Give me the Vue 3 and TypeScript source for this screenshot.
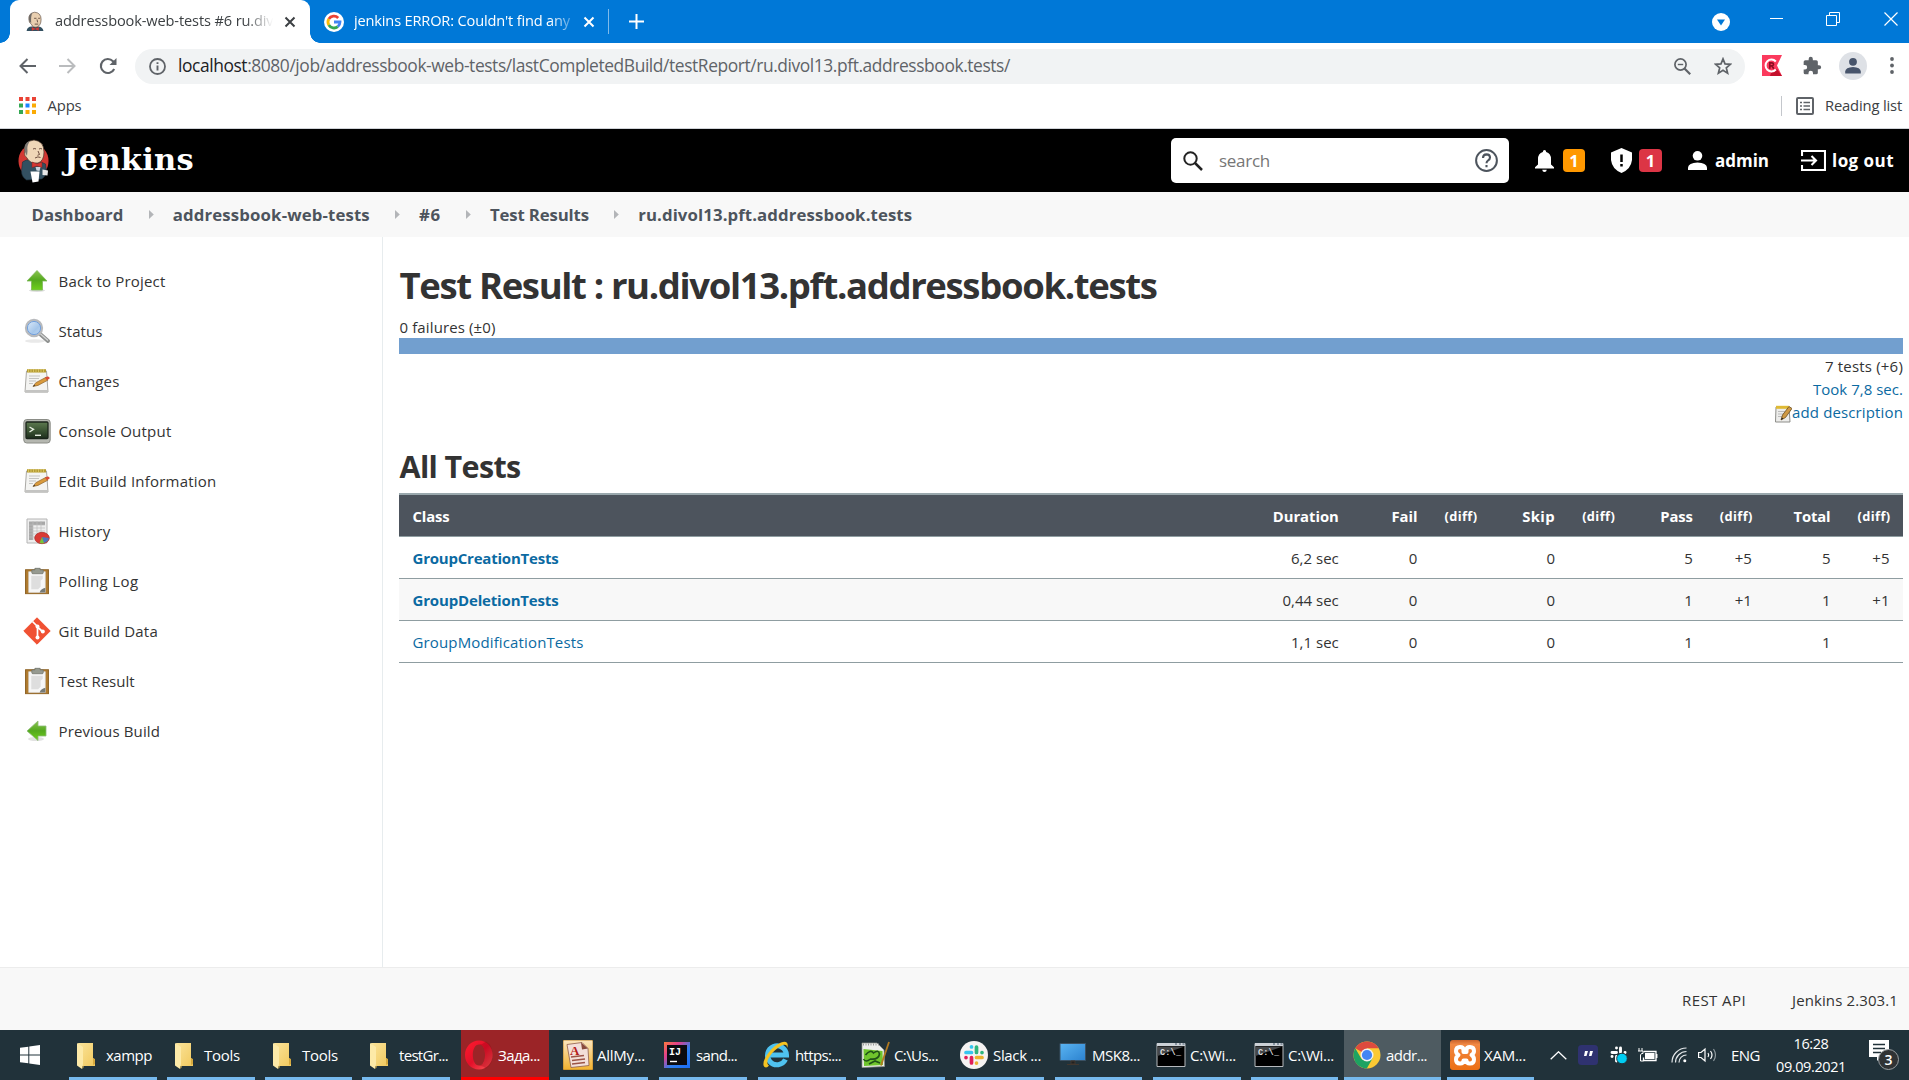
<script setup lang="ts">
interface Task { icon: string; label: string; width: number; left: number; size: number; state?: string }
interface Row { name: string; width: number; bold: boolean; cells: string[] }

// Spreads a label's letters so that it takes the given width in pixels.
const vFit = {
  mounted(el: HTMLElement, binding: { value: number }) {
    const natural = el.getBoundingClientRect().width
    const count = (el.textContent ?? '').length
    if (!count || !binding.value) return
    const gap = (binding.value - natural) / count
    el.style.letterSpacing = `${gap.toFixed(3)}px`
  },
}

const crumbs = [
  { label: 'Dashboard', width: 92 },
  { label: 'addressbook-web-tests', width: 197 },
  { label: '#6', width: 21.5 },
  { label: 'Test Results', width: 99 },
  { label: 'ru.divol13.pft.addressbook.tests', width: 274 },
]

const links = [
  { icon: 'up', label: 'Back to Project', width: 107 },
  { icon: 'search', label: 'Status', width: 44 },
  { icon: 'note', label: 'Changes', width: 61 },
  { icon: 'terminal', label: 'Console Output', width: 113 },
  { icon: 'note', label: 'Edit Build Information', width: 158 },
  { icon: 'history', label: 'History', width: 52 },
  { icon: 'clip', label: 'Polling Log', width: 80 },
  { icon: 'git', label: 'Git Build Data', width: 99.5 },
  { icon: 'clip', label: 'Test Result', width: 76 },
  { icon: 'left', label: 'Previous Build', width: 101.5 },
]

const heads = [
  { label: 'Duration', width: 66 }, { label: 'Fail', width: 26 }, { label: '(diff)', width: 33 },
  { label: 'Skip', width: 33 }, { label: '(diff)', width: 33 }, { label: 'Pass', width: 32.5 },
  { label: '(diff)', width: 33 }, { label: 'Total', width: 37 }, { label: '(diff)', width: 33 },
]

const rows: Row[] = [
  { name: 'GroupCreationTests', width: 146, bold: true, cells: ['6,2 sec', '0', '', '0', '', '5', '+5', '5', '+5'] },
  { name: 'GroupDeletionTests', width: 146, bold: true, cells: ['0,44 sec', '0', '', '0', '', '1', '+1', '1', '+1'] },
  { name: 'GroupModificationTests', width: 171, bold: false, cells: ['1,1 sec', '0', '', '0', '', '1', '', '1', ''] },
]

const tasks: Task[] = [
  { icon: 'folder', label: 'xampp', width: 46, left: 69, size: 88 },
  { icon: 'folder', label: 'Tools', width: 36, left: 167, size: 88 },
  { icon: 'folder', label: 'Tools', width: 36, left: 265, size: 87 },
  { icon: 'folder', label: 'testGr...', width: 49, left: 362, size: 88 },
  { icon: 'opera', label: 'Зада...', width: 42, left: 461, size: 88, state: 'alert' },
  { icon: 'notes', label: 'AllMy...', width: 48, left: 560, size: 88 },
  { icon: 'idea', label: 'sand...', width: 41, left: 659, size: 88 },
  { icon: 'ie', label: 'https:...', width: 46, left: 758, size: 88 },
  { icon: 'npp', label: 'C:\\Us...', width: 44, left: 857, size: 88 },
  { icon: 'slack', label: 'Slack ...', width: 48, left: 956, size: 88 },
  { icon: 'screen', label: 'MSK8...', width: 48, left: 1055, size: 87 },
  { icon: 'cmd', label: 'C:\\Wi...', width: 46, left: 1153, size: 88 },
  { icon: 'cmd', label: 'C:\\Wi...', width: 46, left: 1251, size: 87 },
  { icon: 'chrome', label: 'addr...', width: 41, left: 1344, size: 97, state: 'active' },
  { icon: 'xampp', label: 'XAM...', width: 42, left: 1447, size: 87 },
]
const gapBefore = (i: number) => (i === 0 ? tasks[0].left - 49 : tasks[i].left - tasks[i - 1].left - tasks[i - 1].size)
</script>

<template>
  <div class="desktop">
    <svg width="0" height="0" class="defs">
      <defs>
        <linearGradient id="gGreen" x1="0" y1="0" x2="0" y2="1"><stop offset="0" stop-color="#8bc34f" /><stop offset=".5" stop-color="#54a91e" /><stop offset="1" stop-color="#6fd01c" /></linearGradient>
        <linearGradient id="gLens" x1="0" y1="0" x2="1" y2="1"><stop offset="0" stop-color="#e4effb" /><stop offset=".6" stop-color="#a5c6ea" /><stop offset="1" stop-color="#c6dcf3" /></linearGradient>
        <linearGradient id="gTerm" x1="0" y1="0" x2="0" y2="1"><stop offset="0" stop-color="#5d7a50" /><stop offset=".5" stop-color="#3c5534" /><stop offset="1" stop-color="#1e2e1d" /></linearGradient>
        <linearGradient id="gFolder" x1="0" y1="0" x2="1" y2="1"><stop offset="0" stop-color="#fbe49a" /><stop offset="1" stop-color="#f1c95e" /></linearGradient>
        <linearGradient id="gOpera" x1="0" y1="0" x2="1" y2="1"><stop offset="0" stop-color="#ff1b2d" /><stop offset=".5" stop-color="#e3102a" /><stop offset="1" stop-color="#ff5a5a" /></linearGradient>
        <linearGradient id="gIdea" x1="0" y1="0" x2="1" y2="1"><stop offset="0" stop-color="#fd7a3d" /><stop offset=".3" stop-color="#e23f8c" /><stop offset=".6" stop-color="#2d7ff0" /><stop offset="1" stop-color="#1c6cf5" /></linearGradient>
        <linearGradient id="gNotes" x1="0" y1="0" x2="0" y2="1"><stop offset="0" stop-color="#fbe6c0" /><stop offset="1" stop-color="#f2b22e" /></linearGradient>
        <linearGradient id="gScreen" x1="0" y1="0" x2="1" y2="1"><stop offset="0" stop-color="#5ab4f2" /><stop offset="1" stop-color="#2b82cf" /></linearGradient>
        <linearGradient id="gXampp" x1="0" y1="0" x2="0" y2="1"><stop offset="0" stop-color="#c9622a" /><stop offset=".15" stop-color="#f18843" /><stop offset="1" stop-color="#ec6e12" /></linearGradient>
        <symbol id="pad" viewBox="0 0 26 26">
          <path d="M2.500 3h20l1.500 21H1z" fill="#f4f4f2" stroke="#aaa9a5" />
          <path d="M1.200 22h22.600v2.600H1.200z" fill="#c4c4c2" />
          <path d="M3 1.200h19v3.300H3z" fill="#b49b32" />
          <path d="M4.500 1v3.500M7 1v3.500M9.500 1v3.500M12 1v3.500M14.500 1v3.500M17 1v3.500M19.500 1v3.500" stroke="#e0cb6d" stroke-width=".8" />
          <path d="M5 8h11M5 10.500h10M5 13h7M5 15.500h4" stroke="#c3c3c1" />
          <path d="M9 18.500l2.800-3.800L22 9.300l2 2.800-10 5.300z" fill="#d99a3c" stroke="#8e632b" stroke-width=".7" />
          <path d="M21 9.800l2.200-1.200q2.200-.3 2.600 1.600L23 12.300z" fill="#d84a38" /><path d="M9 18.500l1.200-1.700 1 1z" fill="#333" />
        </symbol>
        <symbol id="clipb" viewBox="0 0 26 26">
          <path d="M2 2.200h22v23H2z" fill="#b07c30" stroke="#8d6122" /><path d="M5 4h16v20H5z" fill="#f7f7f7" stroke="#d6d6d6" stroke-width=".6" />
          <path d="M7.500 8h11v3l-2 1.500v6L14 21H7.500z" fill="#dedede" /><path d="M15.500 24q1-3.500 5.500-4.500V24z" fill="#777b78" />
          <path d="M8 2.300h3V.6h5v1.700h3V5q0 1-1 1H9Q8 6 8 5z" fill="#969a90" stroke="#6f736a" stroke-width=".7" />
        </symbol>
        <symbol id="butler" viewBox="0 0 31 44">
          <ellipse cx="15.500" cy="22" rx="15" ry="16.500" fill="#d33833" />
          <path d="M4.500 23q4-3 8-2l8 1 7 3 1 8q-2 6-5 7l-15 1q-5-3-5-9z" fill="#335061" stroke="#1d2f3a" stroke-width=".6" />
          <path d="M6.500 12.500Q6 2 16 1q10 1 10 12 0 9-6 11-8 1-11-5-3-2-2.500-6.500z" fill="#f0d6b7" stroke="#49372d" stroke-width=".7" />
          <path d="M7 13Q5 4 12 1.800 8.500 7 9.500 12l-.5 5z" fill="#7b7772" />
          <path d="M15 10q2-1 3 0M21 10q2-1 3 0M20 12l1.500 3.500-2 .8M17 19q3-2 5.500-.5" fill="none" stroke="#6b4b3e" stroke-width="1" />
          <path d="M14 23l5 1.800 5-1.800v5.500l-5-1.500-5 1.500z" fill="#d33833" stroke="#81201c" stroke-width=".5" /><path d="M17.500 28h5l-1 4-3-.5z" fill="#c9d3dc" />
          <path d="M12.500 32.500h9l-1 10-6 1z" fill="#fff" /><path d="M24.500 30.500l5.500 1-.5 5-5-.5z" fill="#e8e8e8" />
        </symbol>
        <symbol id="cmdw" viewBox="0 0 30 30">
          <path d="M1 3.500h28v23H1z" fill="#000" stroke="#b7babd" stroke-width="1" /><path d="M1.500 6.500h27L1.500 16z" fill="#45484a" />
          <path d="M1 3h28v3H1z" fill="#ccd1d6" /><path d="M19 4h2M23 4h2M26.500 4h2" stroke="#71808f" stroke-width="1.400" />
        </symbol>
      </defs>
    </svg>

    <!-- browser tabs -->
    <div class="tabs">
      <div class="tab">
        <svg width="18" height="21" viewBox="0 0 31 33"><path d="M1 33q1-8 9-8l12 0q7 1 8 8z" fill="#335061" /><path d="M5 13Q4 2 15 .5q11 1 11 12.500 0 10-7 13-7 2-10-5-4-2-4-8z" fill="#e9cfb0" stroke="#49372d" /><path d="M5 13Q4 4 11 2 8 7 9 19q-4-2-4-6z" fill="#6f6a66" /><path d="M14 11h4M21 11h3M19 13l1 5M15 21h6" stroke="#5c4538" stroke-width="1.500" /><path d="M10 26l6 3 6-3v6.500l-6-2.500-6 2.500z" fill="#d33833" /></svg>
        <span class="tab-title"><span v-fit="218.5">addressbook-web-tests #6 ru.div</span></span>
        <svg class="x1" width="12" height="12" viewBox="0 0 12 12"><path d="M1.500 1.500l9 9M10.500 1.500l-9 9" stroke="#3c4043" stroke-width="2" /></svg>
      </div>
      <svg class="google" width="20" height="20" viewBox="0 0 20 20"><circle cx="10" cy="10" r="10" fill="#fff" /><g fill="none" stroke-width="2.800"><path d="M14.200 5.900A6 6 0 0 0 4.800 7" stroke="#ea4335" /><path d="M4.800 7a6 6 0 0 0 0 6" stroke="#fbbc05" /><path d="M4.800 13a6 6 0 0 0 9 1.600" stroke="#34a853" /><path d="M13.800 14.600A6 6 0 0 0 16 10h-6" stroke="#4285f4" /></g></svg>
      <span class="tab-title light"><span v-fit="216">jenkins ERROR: Couldn't find any</span></span>
      <svg class="x2" width="12" height="12" viewBox="0 0 12 12"><path d="M1.500 1.500l9 9M10.500 1.500l-9 9" stroke="#fff" stroke-width="2" /></svg>
      <i class="tab-sep"></i>
      <svg width="15" height="15" viewBox="0 0 15 15"><path d="M7.500 0v15M0 7.500h15" stroke="#fff" stroke-width="2" /></svg>
      <div class="win">
        <svg width="18" height="18" viewBox="0 0 18 18"><circle cx="9" cy="9" r="9" fill="#fff" /><path d="M5 6.500h8L9 12.500z" fill="#0078d7" /></svg>
        <svg class="w-min" width="13" height="13" viewBox="0 0 13 13"><path d="M0 6.500h13" stroke="#fff" /></svg>
        <svg class="w-max" width="14" height="14" viewBox="0 0 14 14"><path d="M.5 3.500h10v10H.5zM3.500 3V.5h10v10H11" fill="none" stroke="#fff" /></svg>
        <svg class="w-close" width="14" height="14" viewBox="0 0 14 14"><path d="M.5.5l13 13M13.500.5l-13 13" stroke="#fff" stroke-width="1.200" /></svg>
      </div>
    </div>

    <!-- address bar -->
    <div class="toolbar">
      <svg width="17" height="16" viewBox="0 0 17 16" fill="none" stroke="#5f6368" stroke-width="2"><path d="M17 8H1.500M8.500 1l-7 7 7 7" /></svg>
      <svg class="fwd" width="17" height="16" viewBox="0 0 17 16" fill="none" stroke="#babcbe" stroke-width="2"><path d="M0 8h15.500M8.500 1l7 7-7 7" /></svg>
      <svg class="reload" width="18" height="18" viewBox="0 0 18 18"><path d="M15.200 12A7 7 0 1 1 14 4.200L15.500 6" fill="none" stroke="#5f6368" stroke-width="2.100" /><path d="M17.500 1v7h-7z" fill="#5f6368" /></svg>
      <div class="omni">
        <svg width="17" height="17" viewBox="0 0 17 17"><circle cx="8.500" cy="8.500" r="7.500" fill="none" stroke="#5f6368" stroke-width="1.800" /><path d="M8.500 7.400v5M8.500 4.200v1.900" stroke="#5f6368" stroke-width="1.900" /></svg>
        <span v-fit="832" class="url"><b>localhost</b>:8080/job/addressbook-web-tests/lastCompletedBuild/testReport/ru.divol13.pft.addressbook.tests/</span>
        <svg class="zoomi" width="17" height="17" viewBox="0 0 17 17" fill="none" stroke="#5f6368"><circle cx="6.500" cy="6.500" r="5.600" stroke-width="1.700" /><path d="M10.500 10.500l5.700 5.700" stroke-width="2.200" /><path d="M3.800 6.500h5.400" stroke-width="1.400" /></svg>
        <svg class="star" width="18" height="18" viewBox="0 0 18 18"><path d="M9 1.900l2 5 5.400.4-4.100 3.500 1.300 5.300L9 13.200l-4.600 2.900 1.300-5.300L1.600 7.300 7 6.900z" fill="none" stroke="#5f6368" stroke-width="1.700" /></svg>
      </div>
      <svg class="ext" width="20" height="21" viewBox="0 0 20 21"><path d="M0 0h20l-5 10.500L20 21H0z" fill="#fb3a5d" /><path d="M9 18l6-4 5 7H8z" fill="#c4102c" /><path d="M13.800 6.500a5.900 5.900 0 1 0 0 8" fill="none" stroke="#fff" stroke-width="2" /><path d="M7.800 13.800V7.800h2.200q1.600.2 1.500 1.600-.2 1.400-1.500 1.400H8M10 11l1.800 2.800" fill="none" stroke="#8d0e22" stroke-width="1.700" /></svg>
      <svg class="puz" width="20" height="20" viewBox="0 0 24 24"><path fill="#5f6368" d="M20.500 11H19V7a2 2 0 0 0-2-2h-4V3.500a2.500 2.500 0 0 0-5 0V5H4a2 2 0 0 0-2 2v3.800h1.500a2.700 2.700 0 0 1 0 5.400H2V20a2 2 0 0 0 2 2h3.800v-1.500a2.700 2.700 0 0 1 5.400 0V22H17a2 2 0 0 0 2-2v-4h1.500a2.500 2.500 0 0 0 0-5z" /></svg>
      <svg class="ava" width="28" height="28" viewBox="0 0 28 28"><circle cx="14" cy="14" r="14" fill="#dee1e6" /><circle cx="14" cy="9.800" r="3.900" fill="#47546b" /><path d="M6.200 21.500v-2q.3-4 7.800-4.400 7.500.4 7.800 4.400v2z" fill="#47546b" /></svg>
      <svg class="dots" width="4" height="17" viewBox="0 0 4 17" fill="#5f6368"><circle cx="2" cy="2" r="1.900" /><circle cx="2" cy="8.500" r="1.900" /><circle cx="2" cy="15" r="1.900" /></svg>
    </div>

    <div class="bookmarks">
      <svg width="17" height="17" viewBox="0 0 17 17"><path d="M0 0h4v4H0zM6.500 0h4v4h-4zM13 0h4v4h-4z" fill="#ea4335" /><path d="M0 6.500h4v4H0zM0 13h4v4H0z" fill="#34a853" /><path d="M6.500 6.500h4v4h-4z" fill="#1a85ff" /><path d="M13 6.500h4v4h-4zM6.500 13h4v4h-4zM13 13h4v4h-4z" fill="#fbab05" /></svg>
      <span v-fit="34" class="apps">Apps</span>
      <i class="bm-sep"></i>
      <svg width="18" height="18" viewBox="0 0 18 18"><rect x="1" y="1" width="16" height="16" rx="1" fill="none" stroke="#5f6368" stroke-width="2" /><path d="M4 5.500h2M7.500 5.500H14M4 9h2M7.500 9H14M4 12.500h2M7.500 12.500H14" stroke="#5f6368" stroke-width="1.500" /></svg>
      <span v-fit="77" class="reading">Reading list</span>
    </div>

    <!-- Jenkins header -->
    <header class="head">
      <svg width="31" height="44"><use href="#butler" /></svg>
      <span class="brand"><span v-fit="130">Jenkins</span></span>
      <div class="search">
        <svg width="20" height="20" viewBox="0 0 20 20" fill="none" stroke="#222"><circle cx="7.500" cy="7.500" r="6.200" stroke-width="2" /><path d="M12 12l7 7" stroke-width="2.500" /></svg>
        <span class="ph"><span v-fit="51">search</span></span>
        <svg class="help" width="23" height="23" viewBox="0 0 23 23" fill="none" stroke="#4d545d"><circle cx="11.500" cy="11.500" r="10.400" stroke-width="2" /><path d="M8 9q0-3.500 3.500-3.600Q15 5.400 15 8.600q0 1.700-1.800 2.700-1.700 1-1.700 3M11.500 16v2.200" stroke-width="2.100" /></svg>
      </div>
      <svg class="bell" width="19" height="22" viewBox="0 0 19 22" fill="#fff"><path d="M9.500 0q1.600 0 1.700 2Q16 3.500 16 9v5.500l3 2.800V18.500H0v-1.200l3-2.800V9q0-5.500 4.800-7Q7.900 0 9.500 0zM7.200 19.800h4.600q-.3 2.200-2.300 2.200t-2.300-2.200z" /></svg>
      <span class="badge o">1</span>
      <svg class="shield" width="21" height="25" viewBox="0 0 21 25"><path d="M10.500 0L21 4.500V12q-1 9-10.500 13Q1 21 0 12V4.500z" fill="#fff" /><path d="M10.500 6.500v7.500M10.500 16v2.600" stroke="#000" stroke-width="2.500" /></svg>
      <span class="badge r">1</span>
      <svg class="person" width="19" height="19" viewBox="0 0 19 19" fill="#fff"><circle cx="9.500" cy="4.800" r="4.800" /><path d="M0 19v-2.500q.5-4.500 9.500-5 9 .5 9.500 5V19z" /></svg>
      <span class="user"><span v-fit="54">admin</span></span>
      <svg class="exit" width="25" height="21" viewBox="0 0 25 21" fill="none" stroke="#fff" stroke-width="2.100"><path d="M1 6V1h23v19H1v-5M0 10.500h15M10.500 6l4.500 4.500-4.500 4.500" /></svg>
      <span v-fit="62" class="logout">log out</span>
    </header>

    <nav class="crumbs">
      <template v-for="(c, i) in crumbs" :key="c.label">
        <svg v-if="i" width="5" height="9" viewBox="0 0 5 9"><path d="M0 0l4.800 4.500L0 9z" fill="#b3b5b8" /></svg>
        <span class="crumb" v-fit="c.width">{{ c.label }}</span>
      </template>
    </nav>

    <div class="page">
      <aside>
        <a v-for="l in links" :key="l.label" class="link">
          <svg width="28" height="28" viewBox="0 0 28 28">
            <g v-if="l.icon === 'up'"><ellipse cx="14" cy="23.500" rx="8" ry="1.500" fill="#ddd" /><path d="M14 3.500L24 14h-4.500v9h-11v-9H4z" fill="url(#gGreen)" stroke="#7db95a" stroke-width=".8" /></g>
            <g v-else-if="l.icon === 'left'"><ellipse cx="13" cy="22" rx="8" ry="2" fill="#e2e2e2" /><path d="M4 14L15 4v5h8v10h-8v4.500z" fill="url(#gGreen)" stroke="#8dbb78" stroke-width=".8" /></g>
            <g v-else-if="l.icon === 'search'"><ellipse cx="12" cy="24" rx="10" ry="1.800" fill="#e9e9e9" /><path d="M16.500 16.500l8.500 7.500" stroke="#8f9190" stroke-width="4" stroke-linecap="round" /><path d="M17 16.500l8 7" stroke="#d4d5d5" stroke-width="1.300" /><circle cx="11" cy="11" r="8" fill="url(#gLens)" stroke="#b8babd" stroke-width="2.300" /><circle cx="11" cy="11" r="6.600" fill="none" stroke="#6b9cdc" stroke-width=".9" /></g>
            <use v-else-if="l.icon === 'note'" href="#pad" x="1" y="1" width="26" height="26" />
            <g v-else-if="l.icon === 'terminal'"><rect x=".8" y="2.500" width="26.400" height="23.500" rx="3" fill="#b5b7b0" stroke="#8a8c86" /><rect x="3" y="5" width="22" height="16.500" rx="1" fill="url(#gTerm)" stroke="#1b241b" stroke-width="1.300" /><path d="M6.500 10l4 2.300-4 2.700" fill="none" stroke="#e5ecdf" stroke-width="1.400" /><path d="M12 18.300h6" stroke="#e5ecdf" stroke-width="1.400" /></g>
            <g v-else-if="l.icon === 'history'"><path d="M4 2h20v24H4z" fill="#eee" stroke="#b5b5b5" /><path d="M6 4.500h16V8H10v15H6z" fill="#a8a8a8" /><path d="M6 8h16M6 11h16M6 14h16M6 17h14M6 20h12M10 4v19M14 4v16M18 4v14" stroke="#bdbdbd" stroke-width=".7" /><ellipse cx="19" cy="21" rx="7.300" ry="5.700" fill="#d93a35" stroke="#a82522" stroke-width=".7" /><path d="M19 20l7 1q-.5 4-5.500 5z" fill="#4b78bd" /><path d="M19 20l2 6.300q-2.500.3-4.500-.3z" fill="#78c33a" /></g>
            <use v-else-if="l.icon === 'clip'" href="#clipb" x="0.500" y="0.500" width="27" height="27" />
            <g v-else><path d="M14 .8L27.200 14 14 27.200.8 14z" fill="#f05133" stroke="#f05133" stroke-linejoin="round" /><path d="M9.500 4.500l5 5v12M14.500 10l5.500 5" fill="none" stroke="#fff" stroke-width="1.700" /><circle cx="14.500" cy="9.500" r="2" fill="#fff" /><circle cx="14.500" cy="20.500" r="2" fill="#fff" /><circle cx="19.800" cy="14.600" r="2" fill="#fff" /></g>
          </svg>
          <span v-fit="l.width">{{ l.label }}</span>
        </a>
      </aside>
      <main>
        <h1><span v-fit="757">Test Result : ru.divol13.pft.addressbook.tests</span></h1>
        <div class="fails"><span v-fit="96">0 failures (±0)</span></div>
        <div class="bar"></div>
        <div class="meta"><span v-fit="78">7 tests (+6)</span></div>
        <div class="meta blue"><span v-fit="90">Took 7,8 sec.</span></div>
        <div class="meta blue">
          <svg width="17" height="18" viewBox="0 0 17 18"><path d="M1 2h13l1 15H.5z" fill="#ededeb" stroke="#8d8d89" /><path d="M1 .8h13v3H1z" fill="#dfba35" /><path d="M3 6.500h7M3 9h6M3 11.500h4" stroke="#bbb" /><path d="M6 15l1.500-5L14 1.500l3 2-6.500 9z" fill="#cf9a45" stroke="#6b4c20" stroke-width=".8" /><path d="M6 15l.8-2.600 1.600 1z" fill="#222" /></svg>
          <span v-fit="111">add description</span>
        </div>
        <h2><span v-fit="121">All Tests</span></h2>
        <table>
          <colgroup><col /><col class="c-dur" /><col class="c79" /><col class="c59" /><col class="c79" /><col class="c59" /><col class="c79" /><col class="c59" /><col class="c79" /><col class="c59" /></colgroup>
          <thead><tr><th class="name"><span v-fit="37">Class</span></th><th v-for="(h, i) in heads" :key="i" :class="{ diff: h.label === '(diff)' }"><span v-fit="h.width">{{ h.label }}</span></th></tr></thead>
          <tbody>
            <tr v-for="r in rows" :key="r.name">
              <td class="name" :class="{ bold: r.bold }"><span v-fit="r.width">{{ r.name }}</span></td>
              <td v-for="(c, i) in r.cells" :key="i">{{ c }}</td>
            </tr>
          </tbody>
        </table>
      </main>
    </div>

    <footer><span v-fit="64">REST API</span><span v-fit="106" class="ver">Jenkins 2.303.1</span></footer>

    <!-- Windows taskbar -->
    <div class="taskbar">
      <svg class="start" width="20" height="20" viewBox="0 0 20 20" fill="#fff"><path d="M0 2.800L8.300 1.700V9.500H0zM9.300 1.500L20 0v9.500H9.300zM0 10.500h8.300v7.800L0 17.200zM9.300 10.500H20V20L9.300 18.500z" /></svg>
      <div v-for="(t, i) in tasks" :key="i" class="task" :class="t.state" :style="{ width: t.size + 'px', marginLeft: gapBefore(i) + 'px' }">
        <svg width="30" height="30" viewBox="0 0 30 30">
          <g v-if="t.icon === 'folder'"><path d="M6 3h15v15l2 2v6H10z" fill="url(#gFolder)" /><path d="M21 18v7l2-1v-5z" fill="#d6a93e" /><path d="M5 3l6 4v17l-1 5-5-3.500z" fill="#fdeaa8" /><path d="M10.500 26v3l1.500-2.500z" fill="#e1b64f" /></g>
          <g v-else-if="t.icon === 'opera'"><path fill-rule="evenodd" d="M15 .5c8 0 13.500 6.500 13.500 14.500S23 29.500 15 29.500 1 23 1 15 7 .5 15 .5zm0 4c-4 0-6.200 5-6.200 10.500S11 25.500 15 25.500s6-5 6-10.500-2-10.500-6-10.500z" fill="url(#gOpera)" /><path d="M15 4.500q4.500-.5 7-3Q28.500 5 28.500 15T22 28.500q-2.500-2.500-7-3 6-.5 6-10.500T15 4.500z" fill="#8d0010" opacity=".3" /></g>
          <g v-else-if="t.icon === 'notes'"><rect width="30" height="30" rx="1.500" fill="url(#gNotes)" stroke="#b9832d" /><path d="M4 4.500L19 2.500l6 6 1 17-18 2z" fill="#f3dfd9" stroke="#8e5d4b" stroke-width=".8" /><path d="M18 2.500l1 7 6-1z" fill="#8a4a3b" /><path d="M8 17l13-1.500M9 20.500l13-1.500M9 24l13-1.500" stroke="#9c5447" stroke-width="1.700" /><text x="7" y="14.500" font-family="Liberation Serif" font-weight="bold" font-size="13" fill="#b51c20">A</text></g>
          <g v-else-if="t.icon === 'idea'"><rect x="2" y="2" width="26" height="26" fill="url(#gIdea)" /><rect x="5" y="5" width="20" height="20" fill="#0b0b10" /><text x="7" y="15" font-family="Liberation Mono" font-weight="bold" font-size="10" fill="#fff">IJ</text><path d="M8 21.500h7" stroke="#fff" stroke-width="1.400" /></g>
          <g v-else-if="t.icon === 'ie'"><path d="M24.500 19.500a9.500 9.500 0 1 1 1-4.500H9" fill="none" stroke="#4fc3f0" stroke-width="5" /><path d="M3.500 27C-1 23 9 7 20 2.500c6-2.500 8 1 6 5.500.5-4-3-4-7-1.500C10 12 3 23 8 25.500 6.500 27.500 5 28 3.500 27z" fill="#f5c321" /></g>
          <g v-else-if="t.icon === 'npp'"><path d="M2 3h15l7 7 .5 16.500L2 27.500z" fill="#eef0ec" stroke="#8f938d" stroke-width=".7" /><path d="M3.500 9l19 2 .5 14-19 1z" fill="#6fc52d" /><path d="M3 4.500h16" stroke="#9a9a9a" stroke-width="2" stroke-dasharray="1 1.500" /><path d="M5.500 15q5-6 8-2 5-4 6 1-1 6-9 5-5 4-7 0M9 24l6-3 5 2" fill="none" stroke="#1f5317" stroke-width="1.600" /><path d="M21 25.500L29 2" stroke="#b1791f" stroke-width="1.800" /></g>
          <g v-else-if="t.icon === 'slack'"><circle cx="15" cy="15" r="14" fill="#f5f3f2" /><g stroke-width="3.700" stroke-linecap="round"><path d="M7 12.500h5.500M12.500 6.800v.1" stroke="#36c5f0" /><path d="M17.500 7v5.500M23 12.500v.1" stroke="#2eb67d" /><path d="M17.500 17.500H23M17.500 23v.1" stroke="#ecb22e" /><path d="M12.500 17.500V23M7 17.500v.1" stroke="#e01e5a" /></g></g>
          <g v-else-if="t.icon === 'screen'"><path d="M2 3.500h25.500v17H2z" fill="url(#gScreen)" stroke="#3b5163" /><path d="M13 21h4v3h-4zM9 24.500h12" stroke="#41372f" fill="#222" /></g>
          <g v-else-if="t.icon === 'cmd'"><use href="#cmdw" /><text x="4" y="14.500" font-family="Liberation Mono" font-weight="bold" font-size="8.500" textLength="21" fill="#ddd">C:\_</text></g>
          <g v-else-if="t.icon === 'chrome'"><circle cx="15" cy="15" r="13.500" fill="#fbc934" /><path d="M15 15L3.300 8.200A13.500 13.500 0 0 1 26.700 8.300H15z" fill="#dd4b3e" /><path d="M3.300 8.200A13.500 13.500 0 0 0 14.800 28.500l5.800-10.300L15 21l-5.500-2z" fill="#1da362" /><circle cx="15" cy="15" r="6.500" fill="#f1f1f1" /><circle cx="15" cy="15" r="5.100" fill="#4285f4" /></g>
          <g v-else><rect width="30" height="30" rx="3" fill="url(#gXampp)" /><path d="M10 7q-4 0-4 4 0 2.500 2.500 4Q6 16.500 6 19.500q0 4 4 4 3.500 0 3.500-3h3q0 3 3.500 3 4 0 4-4 0-3-2.500-4.500Q24 13.500 24 11q0-4-4-4-3.500 0-3.500 3v2h-3v-2q0-3-3.500-3z" fill="none" stroke="#fff" stroke-width="4" stroke-linejoin="round" /></g>
        </svg>
        <span v-fit="t.width">{{ t.label }}</span>
      </div>
      <div class="tray">
        <svg width="17" height="9" viewBox="0 0 17 9"><path d="M.7 8.300l7.800-7.500 7.800 7.500" fill="none" stroke="#fff" stroke-width="1.300" /></svg>
        <svg class="t-quote" width="20" height="20" viewBox="0 0 20 20"><rect width="20" height="20" rx="3.500" fill="#2f3270" /><path d="M7 6h3l-1.500 5H6zM12 6h3l-1.500 5H11z" fill="#fff" /></svg>
        <svg class="t-slack" width="18" height="18" viewBox="0 0 18 18"><g stroke="#fff" stroke-width="2.900" stroke-linecap="round"><path d="M2 6.500h4.500M6.500 2v.1M10.500 2v4.500M15 6.500h.1M6.500 10.500V15M2 10.500h.1M10.500 10.500H15" /></g><circle cx="12" cy="12.500" r="5.300" fill="#00cdf2" stroke="#21323a" /></svg>
        <svg class="t-bat" width="20" height="14" viewBox="0 0 20 14"><path d="M5.500 3.500H18v9H5.500v-3M18.800 6v4" fill="none" stroke="#fff" stroke-width="1.300" /><path d="M7 5h9.500v6H7z" fill="#fff" /><path d="M1 0v3M4 0v3M0 3h5v2.500H3.500L2.500 7v6h3" fill="none" stroke="#fff" /></svg>
        <svg class="t-wifi" width="16" height="16" viewBox="0 0 16 16" fill="none" stroke="#e6eaec" stroke-width="1.200"><path d="M1 15.500A14.500 14.500 0 0 1 15.500 1M4.500 15.500a11 11 0 0 1 11-11M8 15.500A7.500 7.500 0 0 1 15.500 8" /><circle cx="13.800" cy="13.800" r="1.500" fill="#fff" stroke="none" /></svg>
        <svg class="t-vol" width="21" height="18" viewBox="0 0 21 18" fill="none" stroke="#fff" stroke-width="1.200"><path d="M.6 6.500H3L7 3v12l-4-3.500H.6zM10 7q1.500 2 0 4M12.500 5q3 4 0 8" /><path d="M15.500 3q4 6 0 12" stroke="#8e999e" /></svg>
        <span class="lang"><span v-fit="29">ENG</span></span>
        <div class="clock"><span v-fit="35">16:28</span><span v-fit="70">09.09.2021</span></div>
        <svg class="notif" width="32" height="32" viewBox="0 0 32 32"><path d="M0 0h20v17h-8l-4 4v-4H0z" fill="#fff" /><path d="M4 4.500h12M4 8.500h12M4 12.500h8" stroke="#21323a" stroke-width="1.300" /><circle cx="19.500" cy="19.500" r="10" fill="#303335" stroke="#9a9fa2" /><text x="19.500" y="24.700" text-anchor="middle" font-family="Open Sans" font-weight="600" font-size="14" fill="#fff">3</text></svg>
      </div>
    </div>
  </div>
</template>

<style>
body { margin: 0; overflow: hidden; }
</style>
<style scoped>
.desktop { width: 1909px; height: 1080px; display: flex; flex-direction: column; background: #fff; color: #333; font: 15px/20px "Open Sans", "Noto Sans", sans-serif; overflow: hidden; white-space: nowrap; }
.defs { position: absolute; }
svg { flex: none; display: block; }
span { flex: none; }
.tabs { height: 43px; flex: none; background: #0078d7; display: flex; align-items: center; font-size: 14.6px; }
.tab { position: relative; margin-left: 10px; width: 300px; height: 43px; box-sizing: border-box; background: #fff; border-radius: 9px 9px 0 0; padding-left: 16px; display: flex; align-items: center; color: #3c4043; }
.tab::before, .tab::after { content: ""; position: absolute; bottom: 0; width: 10px; height: 10px; background: radial-gradient(circle at 0 0, transparent 9.5px, #fff 10px); left: -10px; }
.tab::after { left: auto; right: -10px; background: radial-gradient(circle at 100% 0, transparent 9.5px, #fff 10px); }
.tab-title { width: 220px; margin-left: 11px; margin-top: -3px; -webkit-mask-image: linear-gradient(90deg, #000 190px, transparent 218px); mask-image: linear-gradient(90deg, #000 190px, transparent 218px); }
.tab-title > span { display: inline-block; }
.tab-title.light { color: #fff; margin-left: 10px; width: 217px; -webkit-mask-image: linear-gradient(90deg, #000 196px, rgba(0, 0, 0, .3) 217px); mask-image: linear-gradient(90deg, #000 196px, rgba(0, 0, 0, .3) 217px); }
.x1 { margin-left: 9px; }
.google { margin-left: 14px; }
.x2 { margin-left: 12px; }
.tab-sep { width: 1px; height: 25px; background: #7fbbeb; margin: 0 20px 0 13px; }
.win { margin-left: auto; display: flex; align-items: center; padding-right: 11px; }
.w-min { margin: -6px 0 0 40px; }
.w-max { margin: -6px 0 0 43px; }
.w-close { margin: -6px 0 0 44px; }

.toolbar { height: 45px; flex: none; display: flex; align-items: center; padding-left: 19px; }
.fwd { margin-left: 23px; }
.reload { margin-left: 23px; }
.omni { margin-left: 18px; width: 1610px; height: 35px; border-radius: 18px; background: #f1f3f4; display: flex; align-items: center; box-sizing: border-box; padding-left: 14px; margin-top: 1px; }
.url { margin-left: 12px; font-size: 17.4px; color: #5f6368; margin-top: -2px; }
.url b { font-weight: 400; color: #202124; }
.zoomi { margin-left: 664px; }
.star { margin-left: 23px; }
.ext { margin-left: 17px; }
.puz { margin-left: 20px; }
.ava { margin-left: 17px; }
.dots { margin-left: 23px; }

.bookmarks { height: 40px; flex: none; border-bottom: 1px solid #d0d3d8; display: flex; align-items: center; padding: 0 7px 0 19px; color: #3c4043; font-size: 14.8px; }
.bookmarks > * { margin-top: -5px; }
.bookmarks > .apps { margin-left: 11.5px; margin-top: -7px; }
.bookmarks > .reading { margin-left: 11px; margin-top: -7px; }
.bm-sep { width: 1px; height: 20px; background: #c4c7cc; margin-left: auto; margin-right: 14px; }

.head { height: 63px; flex: none; background: #000; display: flex; align-items: center; padding-left: 18px; color: #fff; }
.brand { font: bold 30.5px/40px "DejaVu Serif", serif; margin-left: 15px; width: 131px; margin-top: -3px; }
.search { margin-left: 976px; width: 338px; height: 45px; border-radius: 5px; background: #fff; display: flex; align-items: center; box-sizing: border-box; padding-left: 12px; }
.ph { color: #767676; font-size: 17px; margin-left: 16px; width: 51px; }
.help { margin-left: 205px; }
.bell { margin-left: 26px; }
.badge { width: 22px; height: 23px; border-radius: 4px; text-align: center; line-height: 23px; font-size: 16.5px; font-weight: 700; background: #ff9800; margin-left: 9px; }
.badge.r { width: 23px; background: #dc3545; margin-left: 7px; }
.shield { margin-left: 26px; }
.person { margin-left: 26px; }
.user { margin-left: 8px; font-weight: 700; font-size: 17px; width: 54px; }
.exit { margin-left: 32px; }
.logout { margin-left: 6px; font-weight: 700; font-size: 17px; }

.crumbs { height: 45px; flex: none; background: #f8f8f8; display: flex; align-items: center; padding-left: 31.5px; color: #4d545d; font-weight: 700; font-size: 16.8px; }
.crumbs svg { margin: 0 19px 0 25.3px; }

.page { height: 730px; flex: none; display: flex; }
aside { width: 382px; border-right: 1px solid #e7ecee; padding-top: 18px; }
.link { display: flex; align-items: center; height: 50px; padding-left: 22.5px; font-weight: 500; }
.link svg { margin-top: 1px; }
.link span { margin-left: 8px; margin-top: 2px; }
main { width: 1504px; margin-left: 16px; }
h1 { margin: 23px 0 0; font-size: 36.5px; line-height: 50px; font-weight: 700; height: 50px; }
h2 { margin: 23px 0 0; font-size: 30.5px; line-height: 40px; font-weight: 700; height: 40px; }
.fails { height: 21px; margin-top: 7px; }
h1 > span, h2 > span, .fails > span { margin-left: .5px; }
.bar { height: 16px; background: #729fcf; }
.meta { height: 23px; line-height: 25px; display: flex; justify-content: flex-end; }
.meta svg { margin-top: 5px; }
.blue { color: #0b6aa2; font-weight: 500; }
table { width: 1504px; border-collapse: separate; border-spacing: 0; table-layout: fixed; margin-top: 7px; border-top: 2px solid #9aa8ad; }
.c-dur { width: 120px; }
.c79 { width: 78.7px; }
.c59 { width: 59px; }
th, td { height: 41px; padding: 0 13.5px 0 0; border-bottom: 1px solid #8f9da1; text-align: right; line-height: 20px; font-size: 15px; }
th { background: #4d545d; color: #fff; font-weight: 700; font-size: 14.8px; }
th.diff { font-size: 12.8px; font-weight: 700; padding-right: 12.5px; }
th.name, td.name { text-align: left; padding-left: 13.5px; }
td.name { color: #0b6aa2; }
td.bold { font-weight: 700; }
tbody tr:nth-child(even) { background: #f8f8f8; }

footer { height: 62px; flex: none; border-top: 1px solid #ececec; background: #f8f8f8; display: flex; align-items: center; justify-content: flex-end; padding-right: 11px; font-weight: 500; }
footer span { margin-top: 1px; }
footer .ver { margin-left: 46px; }

.taskbar { height: 50px; flex: none; background: #21323a; display: flex; align-items: center; color: #fff; }
.start { margin: 0 9px 0 20px; }
.task { flex: none; height: 50px; box-sizing: border-box; border-bottom: 3px solid #76b9ed; display: flex; align-items: center; padding-left: 3px; }
.task svg { margin-top: 3px; }
.task span { margin-left: 4px; margin-top: 2px; }
.task.alert { background: #9b2427; border-color: #f00; }
.task.active { background: #4e5b61; padding-left: 8px; }
.tray { display: flex; align-items: center; margin-left: 16px; }
.t-quote { margin-left: 11px; }
.t-slack { margin-left: 12px; }
.t-bat { margin-left: 10px; }
.t-wifi { margin-left: 13px; }
.t-vol { margin-left: 11px; }
.lang { margin-left: 12px; width: 29px; }
.clock { width: 70px; margin-left: 16px; display: flex; flex-direction: column; align-items: center; line-height: 23px; font-size: 14.5px; }
.notif { margin: 0 0 -1px 23px; }
</style>
